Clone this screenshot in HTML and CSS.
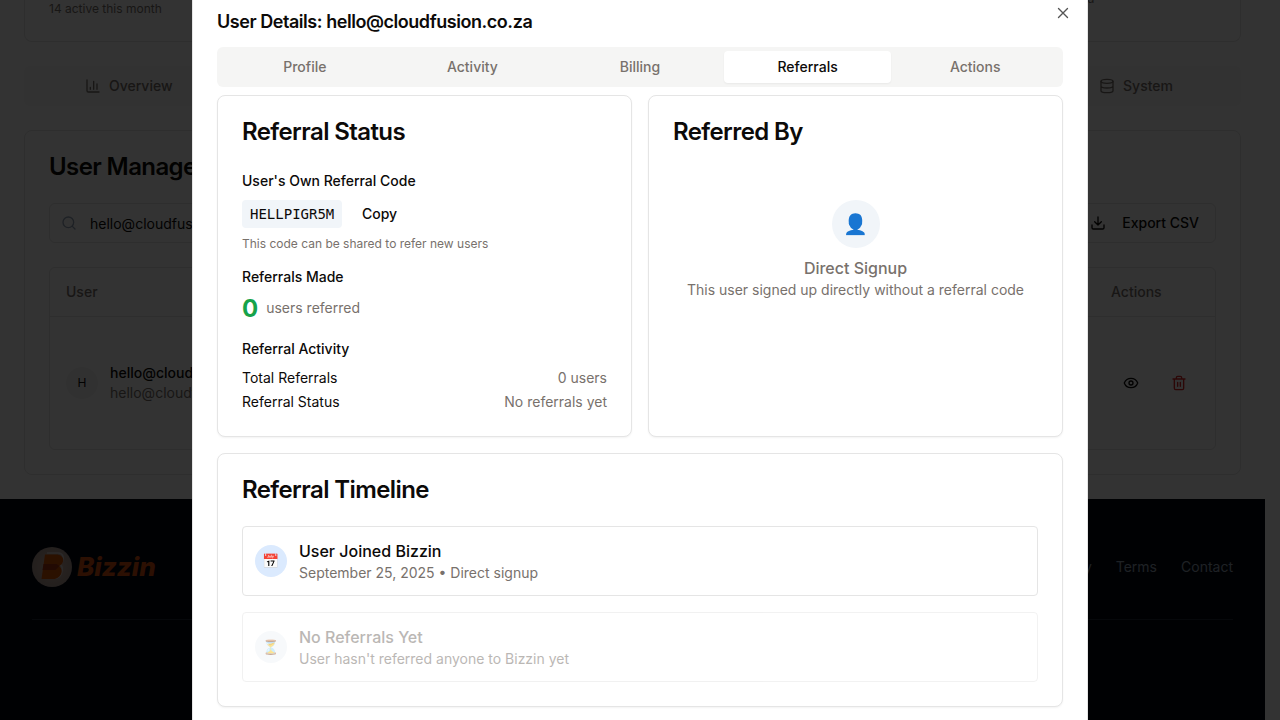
FILE: index.html
```
<!DOCTYPE html>
<html lang="en">
<head>
<meta charset="utf-8">
<title>User Details</title>
<link rel="stylesheet" href="styles.css">
</head>
<body>
<div class="page">
  <main class="content">
    <section class="stats"><span>14 active this month</span><span class="stats-end">d</span></section>
    <nav class="nav">
      <span class="nav-item"><svg class="icon" viewBox="0 0 24 24"><path d="M3 3v16a2 2 0 0 0 2 2h16M18 17V9M13 17V5M8 17v-3"/></svg>Overview</span>
      <span class="nav-item nav-system"><svg class="icon" viewBox="0 0 24 24"><ellipse cx="12" cy="5" rx="9" ry="3"/><path d="M3 5v14a9 3 0 0 0 18 0V5M3 12a9 3 0 0 0 18 0"/></svg>System</span>
    </nav>
    <section class="manage">
      <h1 class="heading">User Management</h1>
      <div class="toolbar">
        <div class="search"><svg class="icon" viewBox="0 0 24 24"><circle cx="11" cy="11" r="8"/><path d="m21 21-4.3-4.3"/></svg><span class="query">hello@cloudfusion.co.za</span></div>
        <div class="export"><svg class="icon" viewBox="0 0 24 24"><path d="M21 15v4a2 2 0 0 1-2 2H5a2 2 0 0 1-2-2v-4M7 10l5 5 5-5M12 15V3"/></svg>Export CSV</div>
      </div>
      <div class="table">
        <div class="thead"><span>User</span><span class="th-actions">Actions</span></div>
        <div class="trow">
          <span class="avatar">H</span>
          <div class="identity"><div class="name">hello@cloudfusion.co.za</div><div class="mail">hello@cloudfusion.co.za</div></div>
          <div class="row-actions">
            <svg class="icon" viewBox="0 0 24 24"><path d="M2.06 12.35a1 1 0 0 1 0-.7 10.75 10.75 0 0 1 19.88 0 1 1 0 0 1 0 .7 10.75 10.75 0 0 1-19.88 0"/><circle cx="12" cy="12" r="3"/></svg>
            <svg class="icon danger" viewBox="0 0 24 24"><path d="M3 6h18M19 6v14a2 2 0 0 1-2 2H7a2 2 0 0 1-2-2V6M8 6V4a2 2 0 0 1 2-2h4a2 2 0 0 1 2 2v2M10 11v6M14 11v6"/></svg>
          </div>
        </div>
      </div>
    </section>
  </main>
  <footer class="footer">
    <div class="footer-top">
      <div class="brand">
        <svg class="logo" viewBox="0 0 40 40"><defs><radialGradient id="disc"><stop offset="0" stop-color="#d8b8a8"/><stop offset="1" stop-color="#b09c94"/></radialGradient></defs><circle cx="20" cy="20" r="20" fill="url(#disc)"/><path d="M15 6h11c6 0 7 7 2 11 5 5 1 14-5 14" fill="none" stroke="#d8d0d0" stroke-width="1.5"/><path d="M13 7.500h11c9 0 9 9 3 11.500 6 5 1 13-6 13H9.500z" fill="#d85400"/><path d="M11.500 17h13l3 2-4 4H10.500z" fill="#a83412"/></svg>
        <span class="brand-name">Bizzin</span>
      </div>
      <div class="links"><span>Privacy</span><span>Terms</span><span>Contact</span></div>
    </div>
  </footer>
</div>
<div class="overlay">
  <div class="modal">
    <svg class="close" viewBox="0 0 24 24"><path d="M18 6 6 18M6 6l12 12"/></svg>
    <h2 class="title">User Details: hello@cloudfusion.co.za</h2>
    <div class="tabs"><span class="tab">Profile</span><span class="tab">Activity</span><span class="tab">Billing</span><span class="tab active">Referrals</span><span class="tab">Actions</span></div>
    <div class="cards">
      <section class="card status">
        <h3 class="heading">Referral Status</h3>
        <div class="label code-label">User's Own Referral Code</div>
        <div class="code-row"><code class="code">HELLPIGR5M</code><span class="copy">Copy</span></div>
        <div class="hint">This code can be shared to refer new users</div>
        <div class="label made">Referrals Made</div>
        <div class="count-row"><span class="count">0</span><span class="muted">users referred</span></div>
        <div class="label activity">Referral Activity</div>
        <div class="pair"><span>Total Referrals</span><span class="muted">0 users</span></div>
        <div class="pair"><span>Referral Status</span><span class="muted">No referrals yet</span></div>
      </section>
      <section class="card">
        <h3 class="heading">Referred By</h3>
        <div class="direct"><span class="person">👤</span><div class="direct-title">Direct Signup</div><div class="muted">This user signed up directly without a referral code</div></div>
      </section>
    </div>
    <section class="card timeline">
      <h3 class="heading">Referral Timeline</h3>
      <div class="event"><span class="bubble">📅</span><div><div class="event-title">User Joined Bizzin</div><div class="muted">September 25, 2025 • Direct signup</div></div></div>
      <div class="event faded"><span class="bubble pale">⏳</span><div><div class="event-title muted-title">No Referrals Yet</div><div class="muted">User hasn't referred anyone to Bizzin yet</div></div></div>
    </section>
  </div>
</div>
</body>
</html>
```
FILE: styles.css
```
* { box-sizing: border-box; }
body { margin: 0; height: 720px; overflow: hidden; background: #fff; color: #0c0a09; font: 14px/20px Inter, "Noto Color Emoji", sans-serif; }
.page { width: 1265px; height: 720px; display: flex; flex-direction: column; }
.content { height: 499px; padding: 0 24px; display: flex; flex-direction: column; flex: none; }
.icon { width: 16px; height: 16px; fill: none; stroke: currentColor; stroke-width: 2; stroke-linecap: round; stroke-linejoin: round; flex: none; }
.stats { height: 42px; border: 1px solid #e5e5e5; border-top: 0; border-radius: 0 0 8px 8px; padding: 1px 24px; font-size: 12px; line-height: 16px; color: #78716c; display: flex; justify-content: space-between; }
.stats-end { width: 129px; margin-top: -10px; }
.nav { height: 40px; margin-top: 24px; background: #f8f8f7; border-radius: 6px; display: flex; justify-content: space-between; align-items: center; padding: 0 68px 0 61px; color: #78716c; font-weight: 500; }
.nav-item { display: flex; align-items: center; gap: 8px; }
.manage { height: 345px; margin-top: 24px; border: 1px solid #e5e5e5; border-radius: 8px; padding: 24px; }
.heading { margin: 0; font-size: 24px; line-height: 24px; font-weight: 600; letter-spacing: -.6px; }
.toolbar { display: flex; justify-content: space-between; margin-top: 24px; }
.search { width: 600px; height: 40px; border: 1px solid #e5e5e5; border-radius: 6px; display: flex; align-items: center; gap: 13px; padding-left: 11px; }
.search .icon { color: #94a3b8; }
.query { padding-top: 2px; }
.export { height: 40px; border: 1px solid #e5e5e5; border-radius: 6px; display: flex; align-items: center; gap: 16px; padding: 0 16px; font-weight: 500; }
.table { height: 183px; margin-top: 24px; border: 1px solid #e5e5e5; border-radius: 6px; }
.thead { height: 49px; border-bottom: 1px solid #e5e5e5; display: flex; align-items: center; justify-content: space-between; padding: 0 16px; color: #78716c; font-weight: 500; }
.th-actions { width: 88px; }
.trow { height: 132px; display: flex; align-items: center; padding: 0 28px 0 16px; }
.avatar { width: 32px; height: 32px; border-radius: 50%; background: #f5f5f4; display: flex; align-items: center; justify-content: center; font-size: 12px; margin-right: 12px; }
.identity { flex: 1; }
.name { font-weight: 500; }
.mail { color: #78716c; }
.row-actions { display: flex; gap: 32px; }
.danger { color: #dc2626; }
.footer { flex: 1; background: #030611; padding: 48px 32px 0; }
.footer-top { height: 73px; border-bottom: 1px solid #1f2937; display: flex; justify-content: space-between; }
.brand { height: 40px; display: flex; align-items: center; gap: 5px; }
.logo { width: 40px; height: 40px; }
.brand-name { color: #dc5210; font-weight: 800; font-style: italic; font-size: 26px; }
.links { display: flex; gap: 24px; height: 40px; align-items: center; color: #94a3b8; }
.overlay { position: fixed; inset: 0; background: rgba(0,0,0,.8); }
.modal { position: absolute; left: 192px; top: -12px; width: 896px; height: 760px; padding: 24px; border: 1px solid #e5e5e5; background: #fff; }
.close { position: absolute; right: 15px; top: 15px; width: 18px; height: 18px; fill: none; stroke: #555; stroke-width: 1.8; stroke-linecap: round; }
.title { margin: 0; font-size: 18px; line-height: 18px; font-weight: 600; letter-spacing: -.45px; }
.tabs { height: 40px; margin-top: 16px; padding: 4px; border-radius: 6px; background: #f5f5f4; display: grid; grid-template-columns: repeat(5,1fr); color: #78716c; font-weight: 500; }
.tab { display: flex; align-items: center; justify-content: center; border-radius: 4px; }
.tab.active { background: #fff; color: #0c0a09; box-shadow: 0 1px 2px rgba(0,0,0,.05); }
.cards { display: grid; grid-template-columns: 1fr 1fr; grid-template-rows: 342px; gap: 16px; margin-top: 8px; height: 342px; }
.card { border: 1px solid #e5e5e5; border-radius: 8px; padding: 24px; background: #fff; box-shadow: 0 1px 2px rgba(0,0,0,.05); }
.label { font-weight: 500; }
.code-label { margin-top: 27px; }
.code-row { display: flex; align-items: center; height: 28px; margin-top: 9px; }
.code { width: 100px; height: 28px; padding: 4px 8px; border-radius: 4px; background: #f1f5f9; font: 14px/20px "DejaVu Sans Mono", monospace; }
.copy { margin-left: 20px; font-weight: 500; }
.hint { margin-top: 8px; font-size: 12px; line-height: 16px; color: #78716c; }
.made { margin-top: 15px; }
.count-row { height: 32px; margin-top: 5px; display: flex; align-items: center; gap: 8px; }
.count { font-size: 24px; line-height: 32px; font-weight: 700; color: #16a34a; padding-top: 1px; }
.activity { margin: 15px 0 9px; }
.pair { display: flex; justify-content: space-between; margin-bottom: 4px; }
.muted { color: #78716c; }
.direct { display: flex; flex-direction: column; align-items: center; padding-top: 56px; }
.person { width: 48px; height: 48px; border-radius: 50%; background: #f1f5f9; display: flex; align-items: center; justify-content: center; font-size: 20px; line-height: 28px; }
.direct-title { margin-top: 8px; font-size: 16px; line-height: 24px; font-weight: 500; color: #78716c; }
.timeline { margin-top: 16px; height: 254px; }
.event { height: 70px; margin-top: 24px; padding: 12px; border: 1px solid #e5e5e5; border-radius: 4px; display: flex; align-items: center; gap: 12px; }
.faded { margin-top: 16px; opacity: .5; }
.bubble { width: 32px; height: 32px; border-radius: 50%; background: #dbeafe; display: flex; align-items: center; justify-content: center; }
.pale { background: #f1f5f9; }
.event-title { font-size: 16px; line-height: 24px; font-weight: 500; }
.muted-title { color: #78716c; }
```
